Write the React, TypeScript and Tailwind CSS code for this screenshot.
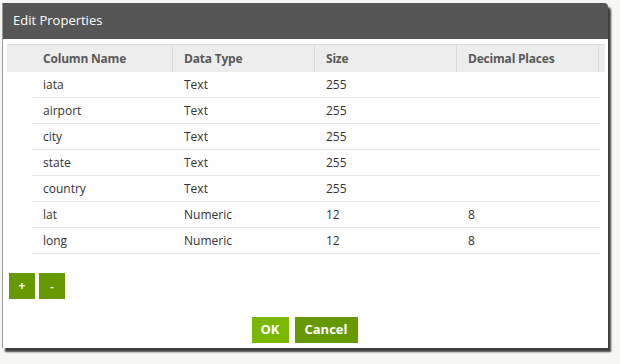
const columns = ["Column Name", "Data Type", "Size", "Decimal Places"];

const rows = [
  ["iata", "Text", "255", ""],
  ["airport", "Text", "255", ""],
  ["city", "Text", "255", ""],
  ["state", "Text", "255", ""],
  ["country", "Text", "255", ""],
  ["lat", "Numeric", "12", "8"],
  ["long", "Numeric", "12", "8"],
];

export default function App() {
  return (
    <div className="w-[620px] h-[364px] bg-[#f6f7f4] pt-[3px] pl-[2px] font-['Open_Sans',sans-serif]">
      {/* Dialog */}
      <div className="w-[606px] h-[345px] bg-white border-l border-[#9a9a9a] rounded-tr-[4px] shadow-[3px_4px_2px_rgba(0,0,0,0.75)] flex flex-col">
        {/* Title bar */}
        <div className="h-[36px] bg-[#565656] rounded-tr-[4px] flex items-center pl-[10px] text-[13px] text-white">
          Edit Properties
        </div>

        {/* Grid */}
        <div className="pt-[5px] pl-[4px] pr-[3px]">
          <div className="flex h-[28px] bg-[#ededed] border-t border-[#dcdcdc] text-[12px] font-bold text-[#5a5a5a] tracking-[-0.2px]">
            <div className="w-[25px]" />
            {columns.map((c, i) => (
              <div
                key={c}
                className={`${i === 0 ? "w-[141px]" : "w-[142px]"} flex items-center pl-[11px] border-r border-[#dadada]`}
              >
                {c}
              </div>
            ))}
            <div className="flex-1" />
          </div>

          {rows.map((r) => (
            <div key={r[0]} className="flex h-[26px] text-[12px] text-[#333]">
              <div className="w-[25px]" />
              <div className="flex w-[568px] border-b border-[#e6e6e6]">
                {r.map((v, i) => (
                  <div
                    key={i}
                    className={`${i === 0 ? "w-[141px]" : "w-[142px]"} flex items-center pl-[11px]`}
                  >
                    {v}
                  </div>
                ))}
              </div>
            </div>
          ))}
        </div>

        {/* Add / remove */}
        <div className="flex gap-[4px] pl-[6px] mt-[19px]">
          <button className="w-[26px] h-[26px] bg-[#669900] text-white text-[12px] font-bold flex items-center justify-center">
            +
          </button>
          <button className="w-[26px] h-[26px] bg-[#669900] text-white text-[11px] font-bold flex items-center justify-center">
            -
          </button>
        </div>

        {/* Footer */}
        <div className="flex justify-center gap-[6px] mt-[18px] pr-[2px]">
          <button className="w-[37px] h-[26px] bg-[#7ab800] text-white text-[13px] font-bold flex items-center justify-center">
            OK
          </button>
          <button className="w-[63px] h-[26px] bg-[#669900] text-white text-[13px] font-bold flex items-center justify-center">
            Cancel
          </button>
        </div>
      </div>
    </div>
  );
}
